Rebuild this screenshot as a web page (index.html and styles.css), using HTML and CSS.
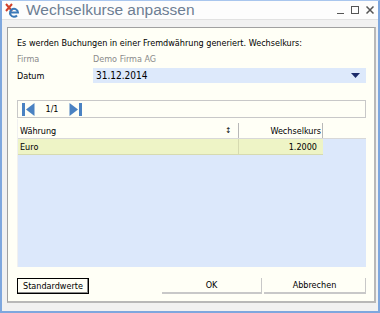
FILE: index.html
```html
<!DOCTYPE html>
<html lang="de">
<head>
    <meta charset="UTF-8">
    <title>Wechselkurse anpassen</title>
    <link rel="stylesheet" href="styles.css">
</head>
<body>
    <div class="window">
        <div class="titlebar">
            <svg class="app-icon" width="16" height="16" viewBox="0 0 16 16">
                <path d="M1 2 L7 9 M7 2 L1 9" stroke="#d0402a" stroke-width="2"/>
                <path d="M5 10.5 H13 A4 4 0 1 0 12 13.5" fill="none" stroke="#3a78b8" stroke-width="2"/>
            </svg>
            <span class="title">Wechselkurse anpassen</span>
            <div class="controls">
                <span class="ctl-min"></span>
                <span class="ctl-max"></span>
                <svg width="8" height="8" viewBox="0 0 8 8"><path d="M0.5 0.5 L7.5 7.5 M7.5 0.5 L0.5 7.5" stroke="#555" stroke-width="1.5"/></svg>
            </div>
        </div>

        <div class="panel">
            <p class="intro">Es werden Buchungen in einer Fremdwährung generiert. Wechselkurs:</p>
            <div class="field muted">
                <span class="label">Firma</span>
                <span class="value">Demo Firma AG</span>
            </div>
            <div class="field">
                <span class="label">Datum</span>
                <div class="combo">
                    <span>31.12.2014</span>
                    <svg width="9" height="5" viewBox="0 0 9 5"><path d="M0 0 H9 L4.5 5 Z" fill="#1a2a6a"/></svg>
                </div>
            </div>

            <div class="navbar">
                <svg width="13" height="13" viewBox="0 0 13 13"><rect x="0" y="0" width="3" height="13" fill="#4a82c2"/><path d="M12.5 0 V13 L4 6.5 Z" fill="#4a82c2"/></svg>
                <span class="pager">1/1</span>
                <svg width="13" height="13" viewBox="0 0 13 13"><path d="M0.5 0 V13 L9 6.5 Z" fill="#4a82c2"/><rect x="10" y="0" width="3" height="13" fill="#4a82c2"/></svg>
            </div>

            <div class="grid">
                <div class="grid-head">
                    <div class="col-cur">Währung <span class="sort">&#8597;</span></div>
                    <div class="col-rate">Wechselkurs</div>
                </div>
                <div class="grid-row">
                    <div class="col-cur">Euro</div>
                    <div class="col-rate">1.2000</div>
                </div>
            </div>

            <div class="buttons">
                <button class="btn-default">Standardwerte</button>
                <span class="spacer"></span>
                <button class="btn btn-ok">OK</button>
                <button class="btn btn-cancel">Abbrechen</button>
            </div>
        </div>
    </div>
</body>
</html>
```

FILE: styles.css
```css
body {
    margin: 0;
    font-family: "DejaVu Sans Condensed", "DejaVu Sans", sans-serif;
    font-stretch: semi-condensed;
    font-size: 9px;
    color: #000;
}
.window {
    width: 376px;
    height: 310px;
    border: 2px solid #7ea7de;
    border-top: 1px solid #a9c6ee;
    background-color: #f1f1f1;
    display: flex;
    flex-direction: column;
}
.titlebar {
    height: 18px;
    background-color: #fdfdfd;
    display: flex;
    align-items: center;
    padding: 0 4px 0 3px;
    border-bottom: 1px solid #e2e2e2;
}
.app-icon {
    margin-right: 5px;
}
.title {
    font-family: "Liberation Sans", sans-serif;
    font-stretch: normal;
    font-size: 15.5px;
    color: #6d7e93;
    flex: 1;
}
.controls {
    display: flex;
    align-items: center;
    gap: 7px;
}
.ctl-min {
    width: 7px;
    height: 7px;
    border-bottom: 1px solid #555;
}
.ctl-max {
    width: 6px;
    height: 6px;
    border: 1px solid #555;
}
.panel {
    margin: 7px 2px 8px 5px;
    flex: 1;
    background-color: #fffff6;
    border: 1px solid #a0a0a0;
    border-right: 2px solid #b8b8b8;
    border-bottom: 2px solid #b8b8b8;
    padding: 10px 8px 7px 9px;
    display: flex;
    flex-direction: column;
}
.intro {
    margin: 0 0 2px 0;
    white-space: nowrap;
}
.field {
    display: flex;
    align-items: center;
    height: 17px;
}
.field .label {
    width: 76px;
}
.muted {
    color: #8a8a8a;
}
.combo {
    flex: 1;
    height: 15px;
    background-color: #dde9fb;
    display: flex;
    align-items: center;
    justify-content: space-between;
    padding: 0 6px 0 3px;
    font-size: 10px;
}
.navbar {
    margin-top: 16px;
    height: 16px;
    border: 1px solid #c8c8c8;
    display: flex;
    align-items: center;
    padding: 0 4px;
}
.pager {
    width: 34px;
    text-align: center;
}
.grid {
    margin-top: 1px;
    flex: 1;
    background-color: #dce8fb;
    border-left: 1px solid #f0f0f0;
}
.grid-head {
    display: flex;
    align-items: flex-end;
    height: 19px;
    background-color: #fffff6;
    border-bottom: 1px solid #d8d8d8;
}
.grid-head .col-cur,
.grid-head .col-rate {
    height: 15px;
    border-right: 1px solid #b8b8b8;
}
.grid-head .col-cur {
    justify-content: space-between;
}
.sort {
    font-size: 8px;
    margin-right: 7px;
}
.grid-row {
    display: flex;
    height: 15px;
    background-color: #eef4c6;
    width: 305px;
    border-bottom: 1px solid #d6dab0;
}
.col-cur {
    width: 218px;
    padding-left: 2px;
    display: flex;
    align-items: center;
    border-right: 1px solid #d6dab0;
}
.col-rate {
    width: 78px;
    padding-right: 5px;
    display: flex;
    align-items: center;
    justify-content: flex-end;
}
.grid-head .col-rate {
    padding-right: 1px;
    width: 82px;
}
.buttons {
    margin-top: 11px;
    display: flex;
    align-items: center;
    gap: 2px;
}
.spacer {
    flex: 1;
}
button {
    font-family: inherit;
    font-stretch: inherit;
    font-size: 9px;
    height: 16px;
    padding: 0;
    color: #000;
    cursor: pointer;
}
.btn-default {
    width: 72px;
    background-color: #fffff6;
    border: 1px solid #000;
    box-shadow: inset -1px -1px 0 #888;
}
.btn {
    background-color: #fffff6;
    border: none;
    border-bottom: 2px solid #c8c8c8;
    border-right: 1px solid #c8c8c8;
}
.btn-ok {
    width: 100px;
}
.btn-cancel {
    width: 102px;
}
```
